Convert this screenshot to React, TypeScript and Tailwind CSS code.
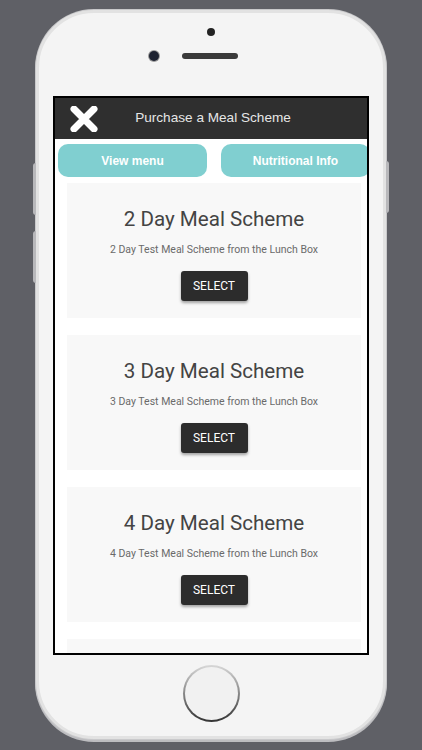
import React from 'react'

const schemes = [2, 3, 4]

function CloseIcon() {
  return (
    <svg width="28" height="26" viewBox="0 0 28 26">
      <path d="M4 3 L24 23 M24 3 L4 23" stroke="#ffffff" strokeWidth="7" strokeLinecap="round" />
    </svg>
  )
}

function SchemeCard({ days }: { days: number }) {
  return (
    <div className="ml-[12px] w-[294px] shrink-0 bg-[#f8f8f8] flex flex-col items-center pt-[24px] pb-[17px]">
      <div className="text-[20.6px] leading-[24px] text-[#444444]">{days} Day Meal Scheme</div>
      <div className="mt-[12px] text-[10.5px] leading-[13px] text-[#6a6a6a]">
        {days} Day Test Meal Scheme from the Lunch Box
      </div>
      <button className="mt-[15px] w-[67px] h-[30px] rounded-[3px] bg-[#2c2c2c] text-white text-[12px] shadow-[0_2px_3px_rgba(0,0,0,0.35)]">
        SELECT
      </button>
    </div>
  )
}

export default function App() {
  return (
    <div className="w-[422px] h-[750px] bg-[#5f6066] overflow-hidden flex justify-center pt-[10px] font-['Roboto',sans-serif]">
      {/* phone body */}
      <div className="relative w-[350px] h-[729px] shrink-0 rounded-[58px] bg-[#f4f4f4] border-[3px] border-[#e2e2e2] shadow-[0_0_0_1px_#c9c9cb,0_2px_0_1px_#bdbdc0] flex flex-col items-center">
        {/* side buttons */}
        <div className="absolute left-[-6px] top-[150px] w-[3px] h-[52px] rounded-l bg-[#b8b8bb]" />
        <div className="absolute left-[-6px] top-[218px] w-[3px] h-[52px] rounded-l bg-[#b8b8bb]" />
        <div className="absolute right-[-6px] top-[148px] w-[3px] h-[52px] rounded-r bg-[#b8b8bb]" />

        {/* top bezel */}
        <div className="h-[83px] w-full relative">
          <div className="absolute left-[168px] top-[15px] w-[8px] h-[8px] rounded-full bg-[#222222]" />
          <div className="absolute left-[110px] top-[38px] w-[10px] h-[10px] rounded-full bg-[#1d2230] shadow-[0_0_0_1px_#9a9a9a]" />
          <div className="absolute left-[143px] top-[40px] w-[56px] h-[6px] rounded-full bg-[#3a3a3a]" />
        </div>

        {/* screen */}
        <div className="w-[316px] h-[559px] border-2 border-black bg-white overflow-hidden flex flex-col shrink-0 font-['Liberation_Sans',Arial,sans-serif]">
          <div className="relative h-[41px] shrink-0 bg-[#2f2f2f] flex items-center justify-center">
            <div className="absolute left-[15px] top-[8px]">
              <CloseIcon />
            </div>
            <span className="ml-[4px] text-[13.6px] text-[#e6e6e6]">Purchase a Meal Scheme</span>
          </div>

          <div className="flex gap-[14px] pl-[3px] mt-[5px] shrink-0">
            <button className="w-[149px] h-[33px] shrink-0 rounded-[10px] bg-[#80cfd0] text-white text-[12px] font-bold">
              View menu
            </button>
            <button className="w-[149px] h-[33px] shrink-0 rounded-[10px] bg-[#80cfd0] text-white text-[12px] font-bold">
              Nutritional Info
            </button>
          </div>

          <div className="flex flex-col gap-[17px] mt-[6px] font-['Roboto',sans-serif]">
            {schemes.map((d) => (
              <SchemeCard key={d} days={d} />
            ))}
            {/* next card, scrolled below the fold */}
            <div className="ml-[12px] w-[294px] h-[134px] shrink-0 bg-[#f8f8f8]" />
          </div>
        </div>

        {/* home button */}
        <div className="mt-[10px] w-[57px] h-[57px] rounded-full bg-gradient-to-b from-[#d8d8d8] via-[#888888] to-[#333333] p-[2px]">
          <div className="w-full h-full rounded-full bg-[#f1f1f1]" />
        </div>
      </div>
    </div>
  )
}
